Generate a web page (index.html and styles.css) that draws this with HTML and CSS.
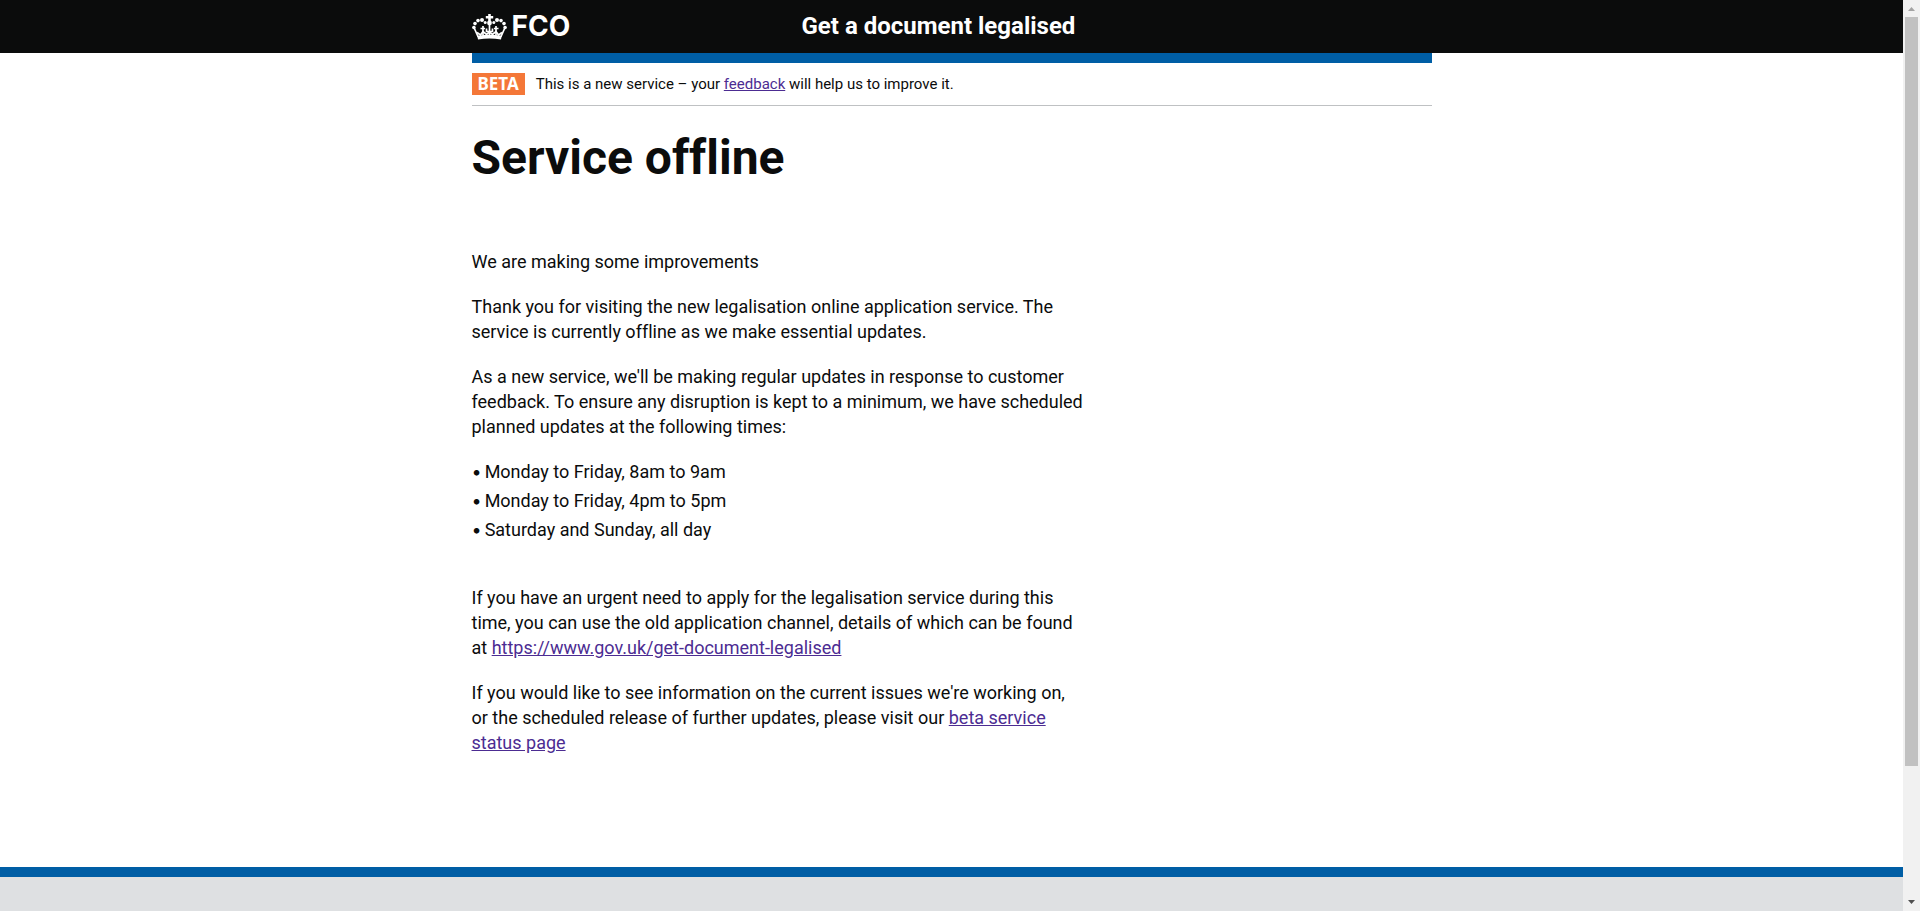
FILE: index.html
```
<!DOCTYPE html>
<html lang="en">
<head>
<meta charset="utf-8">
<meta name="viewport" content="width=device-width, initial-scale=1">
<title>Service offline - Get a document legalised</title>
<link rel="stylesheet" href="styles.css">
</head>
<body>
<div class="page">
  <header class="header">
    <div class="container header-inner">
      <a class="logo" href="#">
        <svg class="crown" viewBox="0 0 35 26" width="35" height="26" aria-hidden="true">
          <g fill="#fff">
            <path d="M16.200 0h2.600v2h2.400v2.600h-2.400v4h-2.600v-4h-2.400V2h2.400z"/>
            <circle cx="17.500" cy="9" r="2.400"/>
            <circle cx="13.200" cy="8.600" r="1.500"/><circle cx="10" cy="6" r="2"/>
            <circle cx="6" cy="6.600" r="1.800"/><circle cx="3" cy="9.600" r="1.800"/><circle cx="1.900" cy="13.500" r="1.800"/>
            <circle cx="21.800" cy="8.600" r="1.500"/><circle cx="25" cy="6" r="2"/>
            <circle cx="29" cy="6.600" r="1.800"/><circle cx="32" cy="9.600" r="1.800"/><circle cx="33.100" cy="13.500" r="1.800"/>
            <path d="M5.300 21.700Q17.500 19.700 29.700 21.700L29 25.500Q17.500 23.700 6 25.500z"/>
          </g>
          <g fill="none" stroke="#fff" stroke-width="1.700">
            <path d="M2.400 14.500L6.200 23M32.600 14.500L28.800 23M17.500 10v11M11 12v9.500M24 12v9.500"/>
            <path d="M8.500 14.500h4.500M22 14.500h4.500M14.500 14.500v3h6v-3M5 18.500l3.500 2.500 2.500-3.500 3.500 3 3-2.500 3 2.500 3.500-3 2.500 3.500 3.500-2.500"/>
          </g>
        </svg>
        <span>FCO</span>
      </a>
      <a class="service-name" href="#">Get a document legalised</a>
    </div>
  </header>
  <div class="container">
    <div class="accent"></div>
    <div class="phase">
      <strong class="tag">BETA</strong>
      <span>This is a new service – your <a href="#">feedback</a> will help us to improve it.</span>
    </div>
    <main class="content">
      <h1>Service offline</h1>
      <p>We are making some improvements</p>
      <p>Thank you for visiting the new legalisation online application service. The service is currently offline as we make essential updates.</p>
      <p>As a new service, we'll be making regular updates in response to customer feedback. To ensure any disruption is kept to a minimum, we have scheduled planned updates at the following times:</p>
      <ul class="times">
        <li>Monday to Friday, 8am to 9am</li>
        <li>Monday to Friday, 4pm to 5pm</li>
        <li>Saturday and Sunday, all day</li>
      </ul>
      <p>If you have an urgent need to apply for the legalisation service during this time, you can use the old application channel, details of which can be found at&nbsp;<a href="#">https://www.gov.uk/get-document-legalised</a></p>
      <p>If you would like to see information on the current issues we're working on, or&nbsp;the scheduled release of further updates, please visit our <a href="#">beta service status page</a></p>
    </main>
  </div>
  <footer class="footer"></footer>
</div>
<div class="scrollbar" aria-hidden="true">
  <svg width="17" height="17" viewBox="0 0 17 17"><path d="M5 11h7L8.500 7z" fill="#a3a3a3"/></svg>
  <div class="track"><div class="thumb"></div></div>
  <svg width="17" height="17" viewBox="0 0 17 17"><path d="M5 6h7l-3.500 4z" fill="#505050"/></svg>
</div>
</body>
</html>
```
FILE: styles.css
```
* { box-sizing: border-box; }
body {
  margin: 0;
  display: flex;
  height: 100vh;
  overflow: hidden;
  background: #fff;
  color: #0b0c0c;
  font-family: Roboto, "Liberation Sans", Arial, sans-serif;
  font-size: 18px;
  line-height: 25px;
  font-variant-ligatures: none;
}
a { color: #4c2c92; text-underline-offset: 1px; }
.page {
  flex: 1;
  min-width: 0;
  display: flex;
  flex-direction: column;
}
.container {
  width: 100%;
  max-width: 960px;
  margin: 0 auto;
}
.header { background: #0b0c0c; }
.header-inner {
  display: grid;
  grid-template-columns: 330px 1fr;
  align-items: center;
  height: 53px;
}
.header a { color: #fff; text-decoration: none; font-weight: 700; }
.logo {
  display: flex;
  align-items: center;
  gap: 5px;
  font-family: Inter, Roboto, sans-serif;
  font-size: 28px;
}
.service-name { font-size: 24px; }
.accent { height: 10px; background: #005ea5; }
.phase {
  display: flex;
  align-items: center;
  gap: 11px;
  padding: 10px 0;
  border-bottom: 1px solid #bfc1c3;
  font-size: 15px;
  line-height: 22px;
}
.tag {
  padding: 0 6px;
  background: #f47738;
  color: #fff;
  font-family: "Noto Sans", "Open Sans", sans-serif;
  font-size: 17px;
}
.content { max-width: 625px; }
h1 {
  margin: 27px 0 66px;
  font-size: 48px;
  line-height: 50px;
  font-weight: 700;
}
p { margin: 0 0 20px; }
.times {
  margin: 0 0 43px;
  padding: 0;
  list-style: none;
}
.times li {
  display: flex;
  gap: 3px;
  margin-bottom: 4px;
}
.times li::before { content: "•"; font-family: Inter, sans-serif; }
.footer {
  flex: 1;
  margin-top: 92px;
  border-top: 10px solid #005ea5;
  background: #dee0e2;
}
.scrollbar {
  width: 17px;
  display: flex;
  flex-direction: column;
  background: #f1f1f1;
}
.scrollbar svg { display: block; }
.track { flex: 1; padding: 0 2px; }
.thumb { height: 85.4%; background: #c1c1c1; }
```
